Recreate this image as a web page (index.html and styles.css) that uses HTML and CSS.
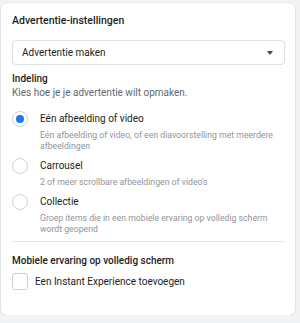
FILE: index.html
```html
<!DOCTYPE html>
<html>
<head>
  <meta charset="utf-8">
  <title>Advertentie-instellingen</title>
  <link rel="stylesheet" href="styles.css">
</head>
<body>
  <div class="card">
    <h2 class="card-title">Advertentie-instellingen</h2>

    <div class="select">
      <span>Advertentie maken</span>
      <span class="caret"></span>
    </div>

    <h3 class="section-title">Indeling</h3>
    <p class="section-sub">Kies hoe je je advertentie wilt opmaken.</p>

    <div class="options">
      <div class="option">
        <span class="radio checked"></span>
        <div class="option-text">
          <div class="option-label">Eén afbeelding of video</div>
          <div class="option-desc">Eén afbeelding of video, of een diavoorstelling met meerdere afbeeldingen</div>
        </div>
      </div>
      <div class="option">
        <span class="radio"></span>
        <div class="option-text">
          <div class="option-label">Carrousel</div>
          <div class="option-desc">2 of meer scrollbare afbeeldingen of video's</div>
        </div>
      </div>
      <div class="option">
        <span class="radio"></span>
        <div class="option-text">
          <div class="option-label">Collectie</div>
          <div class="option-desc">Groep items die in een mobiele ervaring op volledig scherm wordt geopend</div>
        </div>
      </div>
    </div>

    <hr class="divider">

    <h3 class="section-title section-title--mobile">Mobiele ervaring op volledig scherm</h3>
    <label class="check-row">
      <span class="checkbox"></span>
      <span>Een Instant Experience toevoegen</span>
    </label>
  </div>
</body>
</html>
```

FILE: styles.css
```css
body {
  margin: 0;
  background-color: #f2f3f5;
  color: #1c1e21;
  font-family: Roboto, "Liberation Sans", sans-serif;
}

h2, h3, p {
  margin: 0;
}

.card {
  box-sizing: border-box;
  width: 294px;
  height: 312px;
  margin: 3px 0 0 1px;
  padding: 11px 10px 0 11px;
  background-color: white;
  border-radius: 6px;
  box-shadow: 0 0 0 1px rgba(0, 0, 0, .04), 0 1px 2px rgba(0, 0, 0, .1);
}

.card-title {
  font-size: 10.5px;
  font-weight: 500;
  line-height: 14px;
}

.select {
  box-sizing: border-box;
  display: flex;
  align-items: center;
  justify-content: space-between;
  height: 25px;
  margin-top: 12px;
  padding: 0 11px 0 9px;
  border: 1px solid #dddfe2;
  border-radius: 4px;
  font-size: 10px;
  color: #1c1e21;
}

.caret {
  width: 0;
  height: 0;
  border-left: 3.5px solid transparent;
  border-right: 3.5px solid transparent;
  border-top: 4px solid #444950;
}

.section-title {
  margin-top: 7px;
  font-size: 10px;
  font-weight: 500;
  line-height: 13px;
}

.section-sub {
  margin-top: 1px;
  font-size: 10px;
  line-height: 13px;
  color: #606770;
}

.options {
  margin-top: 13px;
}

.option {
  display: flex;
  gap: 12px;
  margin-bottom: 7px;
}

.option:last-child {
  margin-bottom: 0;
}

.radio {
  flex: none;
  box-sizing: border-box;
  width: 16px;
  height: 16px;
  margin-top: -1px;
  border: 1px solid #ccd0d5;
  border-radius: 50%;
  position: relative;
}

.radio.checked::after {
  content: "";
  position: absolute;
  left: 3px;
  top: 3px;
  width: 8px;
  height: 8px;
  border-radius: 50%;
  background-color: #1877f2;
}

.option-label {
  font-size: 10px;
  line-height: 14px;
  color: #1c1e21;
}

.option-desc {
  margin-top: 4px;
  font-size: 8.7px;
  line-height: 11px;
  color: #90949c;
}

.divider {
  margin: 6px 0 0;
  border: 0;
  border-top: 1px solid #e4e6eb;
}

.section-title--mobile {
  margin-top: 12px;
}

.check-row {
  display: flex;
  align-items: center;
  gap: 7px;
  margin-top: 6px;
  font-size: 10px;
  color: #1c1e21;
}

.checkbox {
  box-sizing: border-box;
  width: 16px;
  height: 17px;
  border: 1px solid #ccd0d5;
  border-radius: 3px;
}
```
